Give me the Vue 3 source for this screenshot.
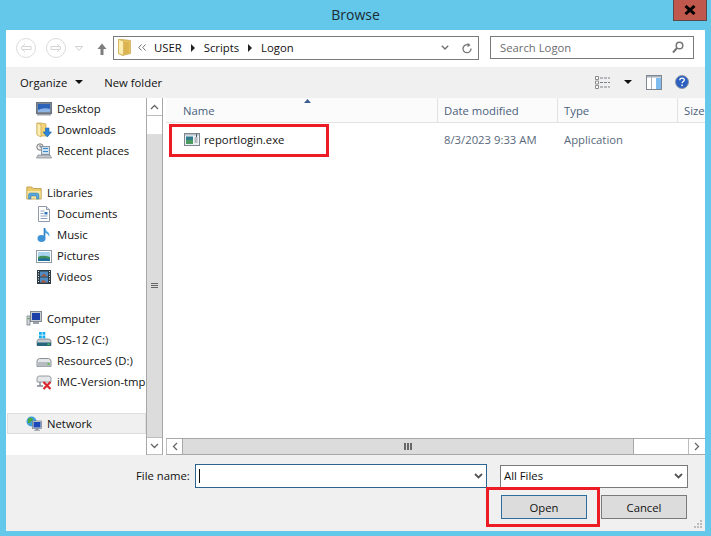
<script setup>
const tree = [
  { label: 'Desktop', icon: 'i-desktop' },
  { label: 'Downloads', icon: 'i-downloads' },
  { label: 'Recent places', icon: 'i-recent', gap: true },
  { label: 'Libraries', icon: 'i-libraries', head: true },
  { label: 'Documents', icon: 'i-doc' },
  { label: 'Music', icon: 'i-music' },
  { label: 'Pictures', icon: 'i-pictures' },
  { label: 'Videos', icon: 'i-videos', gap: true },
  { label: 'Computer', icon: 'i-computer', head: true },
  { label: 'OS-12 (C:)', icon: 'i-os' },
  { label: 'ResourceS (D:)', icon: 'i-drive' },
  { label: 'iMC-Version-tmp', icon: 'i-netdrive', gap: true },
  { label: 'Network', icon: 'i-network', head: true, selected: true },
]
</script>

<template>
  <div class="page">
    <svg class="sheet" width="0" height="0" aria-hidden="true">
      <symbol id="i-folder" viewBox="0 0 13 17">
        <path d="M.5.5h4l8 1v13l-8 2-4-2z" fill="#e7c35f" stroke="#c9a44c" stroke-width=".7" />
        <path d="M.5.500l5 1.500v14.500l-5-2z" fill="#fbeeb0" stroke="#d0ac55" stroke-width=".7" />
        <path d="M6 3h5v11l-5 1.500z" fill="#dcb44f" />
      </symbol>
      <symbol id="i-desktop" viewBox="0 0 16 16">
        <rect x=".5" y="1.500" width="15" height="11" fill="#7c8794" stroke="#6b7480" />
        <rect x="2" y="3" width="12" height="8" fill="#2a63b8" />
        <path d="M2 9q6-3 12-1v3H2z" fill="#8db4e6" />
        <rect x="1" y="13" width="14" height="1.500" fill="#9aa3ad" />
      </symbol>
      <symbol id="i-downloads" viewBox="0 0 16 16">
        <path d="M1 1h4l5 1v12H5l-4-2z" fill="#f2d477" stroke="#c9a44c" stroke-width=".7" />
        <path d="M1 1l4 1.500V15l-4-2z" fill="#fbeeb0" stroke="#c9a44c" stroke-width=".7" />
        <path d="M9.500 6h3.500v4h2.500l-4.250 5-4.250-5h2.500z" fill="#2c86d8" stroke="#1b62a8" stroke-width=".6" />
      </symbol>
      <symbol id="i-recent" viewBox="0 0 16 16">
        <circle cx="4" cy="4" r="3.200" fill="#eee" stroke="#777" />
        <path d="M4 2v2h2" fill="none" stroke="#555" stroke-width=".8" />
        <rect x="5.500" y="3.500" width="8" height="8" fill="#cfe0ee" stroke="#8a98a6" />
        <rect x="7" y="5" width="5" height="1" fill="#3a8cc8" />
        <rect x="7" y="8" width="5" height="1" fill="#3a8cc8" />
        <path d="M2 12h12l1.500 3H.5z" fill="#c4c8cc" stroke="#7e858c" stroke-width=".7" />
      </symbol>
      <symbol id="i-libraries" viewBox="0 0 16 16">
        <path d="M.8 2h5l1.500 1.500h7.900V14H.8z" fill="#eccb6a" stroke="#b8963f" stroke-width=".8" />
        <path d="M1.500 6h13v7.500h-13z" fill="#f8e7a4" />
        <path d="M2.500 14v-4q0-2 2-2h6q2.500 0 2.500 2v4h-2.500v-3h-5.500v3z" fill="#58a5d6" stroke="#2e7cb2" stroke-width=".5" />
      </symbol>
      <symbol id="i-doc" viewBox="0 0 16 16">
        <path d="M2.500.5h8l3 3v12h-11z" fill="#fff" stroke="#8f99a8" />
        <path d="M10.500.5v3h3" fill="#dfe6ee" stroke="#8f99a8" />
        <path d="M4.500 5h4M4.500 7.500h3M4.500 10h7M4.500 12.500h7" stroke="#8aa0c2" />
        <rect x="8.500" y="6" width="3" height="2.500" fill="#2e79b9" />
      </symbol>
      <symbol id="i-music" viewBox="0 0 16 16">
        <path d="M8.500 1v10" stroke="#2c7fc4" stroke-width="1.600" />
        <ellipse cx="5.500" cy="11.500" rx="4" ry="3.400" fill="#3e93d6" />
        <path d="M9 1q1 3 3.500 4.500 1.500 2 .5 4.500-.2-2.800-4-4z" fill="#56a6e0" />
      </symbol>
      <symbol id="i-pictures" viewBox="0 0 16 16">
        <rect x=".5" y="2.500" width="15" height="12" fill="#fff" stroke="#8f99a8" />
        <rect x="2" y="4" width="12" height="9" fill="#a9d4ef" />
        <path d="M2 9q4-2.500 12 0v4H2z" fill="#3f8f5a" />
        <path d="M2 11q6-1.500 12 0v2H2z" fill="#1f6f9f" />
      </symbol>
      <symbol id="i-videos" viewBox="0 0 16 16">
        <rect x="1" y="1" width="14" height="14" fill="#2d3c44" />
        <rect x="4" y="2.500" width="8" height="5" fill="#4f8dc4" />
        <rect x="4" y="8.500" width="8" height="5" fill="#4f8dc4" />
        <path d="M5 7.500l3-3 3 3zM5 13.500l2-3 4 3z" fill="#a8583c" />
        <path d="M2 2.500h1M2 5h1M2 7.500h1M2 10h1M2 12.500h1M13 2.500h1M13 5h1M13 7.500h1M13 10h1M13 12.500h1" stroke="#dfe6ee" />
      </symbol>
      <symbol id="i-computer" viewBox="0 0 16 16">
        <rect x="4.500" y=".5" width="11" height="10" fill="#c6ccd2" stroke="#828a92" />
        <rect x="6" y="2" width="8" height="7" fill="#1c3fa8" />
        <rect x="7" y="11" width="6" height="2" fill="#9aa3ad" />
        <rect x="1" y="5" width="3" height="9" fill="#d4d8dc" stroke="#6d757d" stroke-width=".7" />
        <rect x="1.700" y="7" width="1.600" height="1.200" fill="#4ca34c" />
      </symbol>
      <symbol id="i-os" viewBox="0 0 16 16">
        <path d="M3 0h2.800v2.800H3zM6.500 0h2.800v2.800H6.500zM3 3.500h2.800v2.800H3zM6.500 3.500h2.800v2.800H6.500z" fill="#10aef0" />
        <path d="M1 9q.5-2 2.500-2h9q2 0 2.500 2v4.500H1z" fill="#c2cad0" stroke="#677079" stroke-width=".7" />
        <rect x="1" y="10.500" width="14" height="3.500" rx=".5" fill="#27657e" />
        <rect x="11.500" y="11.500" width="2" height="1.500" fill="#5fc04a" />
      </symbol>
      <symbol id="i-drive" viewBox="0 0 16 16">
        <path d="M1 8q.5-2.500 2.500-2.500h9Q14.500 5.500 15 8v5.500H1z" fill="#e4e7e9" stroke="#6f777e" stroke-width=".8" />
        <rect x="1.500" y="9" width="13" height="4.500" fill="#b6bcc2" />
        <rect x="11.500" y="10" width="2" height="2" fill="#5fc04a" />
      </symbol>
      <symbol id="i-netdrive" viewBox="0 0 16 16">
        <path d="M1 4q.5-2 2.500-2h9q2 0 2.500 2v4H1z" fill="#e4e7e9" stroke="#80888e" stroke-width=".8" />
        <path d="M1 12h6M4 8v4" stroke="#80888e" stroke-width="1.400" />
        <path d="M7.500 8l7 7M14.500 8l-7 7" stroke="#d8262c" stroke-width="2.200" />
      </symbol>
      <symbol id="i-network" viewBox="0 0 16 16">
        <circle cx="5.500" cy="5.500" r="5" fill="#3f9fd8" />
        <path d="M2 3q2-2 4-1 2 2-1 3.500-1 2-3 1.500zM6 7q2 0 2 2-1 2-2 1z" fill="#4aa843" />
        <rect x="6.500" y="5" width="9" height="7.500" fill="#d4dce2" stroke="#6f7a85" stroke-width=".7" />
        <rect x="7.500" y="6" width="7" height="5.500" fill="#1c49b8" />
        <rect x="9.500" y="13" width="3" height="1" fill="#808a94" />
        <rect x="8" y="14" width="6" height="1" fill="#a8b0b8" />
      </symbol>
      <symbol id="i-exe" viewBox="0 0 16 13">
        <rect x=".5" y=".5" width="15" height="12" fill="#eef1f3" stroke="#7e868e" />
        <rect x="1" y="1" width="14" height="1.500" fill="#b9c2ca" />
        <rect x="2" y="3.500" width="7" height="7.500" fill="#2f7d8c" />
        <rect x="2" y="7" width="7" height="4" fill="#4b9b62" />
        <path d="M10.500 5h3M10.500 7h3M10.500 9h3" stroke="#7e868e" />
        <path d="M12.500 1v3" stroke="#4a5560" />
      </symbol>
    </svg>

    <header class="titlebar">
      <span></span>
      <h1 class="title">Browse</h1>
      <button class="close"><svg width="14" height="10" viewBox="0 0 14 10"><path d="M2.500 1l9 8M11.500 1l-9 8" stroke="#000" stroke-width="3" /></svg></button>
    </header>

    <section class="window">
      <div class="nav">
        <span class="round"><svg width="12" height="10" viewBox="0 0 12 10"><path d="M5 1L1 5l4 4M1.500 3.500h9.500v3H1.500" fill="none" stroke="#d4d4d4" /></svg></span>
        <span class="round fwd"><svg width="12" height="10" viewBox="0 0 12 10"><path d="M7 1l4 4-4 4M10.500 3.500H1v3h9.500" fill="none" stroke="#d4d4d4" /></svg></span>
        <svg class="hist" width="8" height="5" viewBox="0 0 8 5"><path d="M.5.500h7L4 4.500z" fill="#fff" stroke="#d0d0d0" /></svg>
        <svg class="up" width="10" height="12" viewBox="0 0 10 12"><path d="M5 .5L9.500 6H6.500v6h-3V6H.5z" fill="#7d7d7d" /></svg>
        <div class="address">
          <svg class="addr-folder" width="13" height="17"><use href="#i-folder" /></svg>
          <svg class="chev" width="8" height="7" viewBox="0 0 8 7"><path d="M3.500.5L.8 3.500l2.700 3M7.500.5L4.800 3.500l2.700 3" fill="none" stroke="#707070" /></svg>
          <span class="crumb first">USER</span>
          <span class="tri"></span>
          <span class="crumb">Scripts</span>
          <span class="tri"></span>
          <span class="crumb">Logon</span>
          <svg class="addr-down" width="8" height="5" viewBox="0 0 8 5"><path d="M.8.800L4 4l3.200-3.200" fill="none" stroke="#707070" stroke-width="1.400" /></svg>
          <svg class="refresh" width="10" height="12" viewBox="0 0 10 12"><path d="M9 6.500A4 4 0 1 1 6.500 3" fill="none" stroke="#777" stroke-width="1.300" /><path d="M5.500.8l3 2.200-2.800 2.200z" fill="#777" /></svg>
        </div>
        <div class="search">
          <span>Search Logon</span>
          <svg width="12" height="13" viewBox="0 0 12 13"><circle cx="7.500" cy="4.500" r="3.300" fill="none" stroke="#777" stroke-width="1.500" /><path d="M5 7l-4 4.500" stroke="#777" stroke-width="2" /></svg>
        </div>
      </div>

      <div class="toolbar">
        <span class="tool">Organize</span>
        <span class="caret organize-caret"></span>
        <span class="tool newf">New folder</span>
        <span class="tool-right">
          <svg width="15" height="13" viewBox="0 0 15 13"><path d="M.5.5h3v3h-3zM.5 5h3v3h-3zM.5 9.500h3v3h-3z" fill="#fff" stroke="#8a8a8a" /><path d="M5 2h10M5 6.500h10M5 11h10" stroke="#7c8086" stroke-dasharray="3 1" /></svg>
          <span class="caret view-caret"></span>
          <svg class="pane-icon" width="16" height="15" viewBox="0 0 16 15"><rect x=".5" y=".5" width="15" height="14" fill="#fff" stroke="#7d8892" /><rect x="1" y="1" width="14" height="1.500" fill="#a9b2ba" /><path d="M5.500 2v12" stroke="#a9b2ba" /><rect x="10" y="3" width="5" height="11" fill="#7fbcf0" /></svg>
          <svg width="14" height="14" viewBox="0 0 14 14"><circle cx="7" cy="7" r="6.500" fill="#2b5fc0" stroke="#8f98a2" /><path d="M4.800 5.200q0-2 2.300-2t2.200 1.900q0 1-1.300 1.700-.9.500-.9 1.400" fill="none" stroke="#fff" stroke-width="1.300" /><rect x="6.300" y="9.600" width="1.500" height="1.500" fill="#fff" /></svg>
        </span>
      </div>

      <div class="main">
        <aside class="side">
          <ul class="tree">
            <li v-for="r in tree" :key="r.label" class="row" :class="{ head: r.head, gap: r.gap, selected: r.selected }">
              <svg width="16" height="16"><use :href="'#' + r.icon" /></svg>
              <span class="row-label">{{ r.label }}</span>
            </li>
          </ul>
          <div class="vbar">
            <span class="vbtn"><svg width="9" height="6" viewBox="0 0 9 6"><path d="M1 5l3.500-3.500L8 5" fill="none" stroke="#666" stroke-width="1.300" /></svg></span>
            <span class="vthumb"><i></i><i></i><i></i></span>
            <span class="vbtn down"><svg width="9" height="6" viewBox="0 0 9 6"><path d="M1 1l3.500 3.500L8 1" fill="none" stroke="#666" stroke-width="1.300" /></svg></span>
          </div>
        </aside>
        <div class="files">
          <div class="cols header">
            <span class="col">Name<svg class="sort" width="7" height="4" viewBox="0 0 7 4"><path d="M3.500 0L7 4H0z" fill="#3b5e8c" /></svg></span>
            <span class="col">Date modified</span>
            <span class="col">Type</span>
            <span class="col last">Size</span>
          </div>
          <div class="cols file">
            <span class="col name"><svg width="16" height="13"><use href="#i-exe" /></svg>reportlogin.exe</span>
            <span class="col meta">8/3/2023 9:33 AM</span>
            <span class="col meta">Application</span>
            <span class="col"></span>
          </div>
          <div class="hbar">
            <span class="hbtn"><svg width="6" height="9" viewBox="0 0 6 9"><path d="M5 1L1.500 4.500 5 8" fill="none" stroke="#666" stroke-width="1.300" /></svg></span>
            <span class="hthumb"><i></i><i></i><i></i></span>
            <span class="hrest"></span>
            <span class="hbtn right"><svg width="6" height="9" viewBox="0 0 6 9"><path d="M1 1l3.500 3.500L1 8" fill="none" stroke="#666" stroke-width="1.300" /></svg></span>
          </div>
        </div>
      </div>

      <footer class="footer">
        <div class="line1">
          <label class="fname-label">File name:</label>
          <div class="fname">
            <span class="cursor"></span>
            <svg width="9" height="6" viewBox="0 0 9 6"><path d="M1 1l3.500 3.500L8 1" fill="none" stroke="#555" stroke-width="1.800" /></svg>
          </div>
          <div class="filter">
            <span class="filter-text">All Files</span>
            <svg width="9" height="6" viewBox="0 0 9 6"><path d="M1 1l3.500 3.500L8 1" fill="none" stroke="#555" stroke-width="1.800" /></svg>
          </div>
        </div>
        <div class="line2">
          <button class="btn primary">Open</button>
          <button class="btn">Cancel</button>
        </div>
        <svg class="grip" width="9" height="9" viewBox="0 0 9 9"><path d="M6 0h2v2H6zM3 3h2v2H3zM6 3h2v2H6zM0 6h2v2H0zM3 6h2v2H3zM6 6h2v2H6z" fill="#bdbdbd" /></svg>
      </footer>

      <div class="mark mark-file"></div>
      <div class="mark mark-open"></div>
    </section>
  </div>
</template>

<style>
html, body { margin: 0; padding: 0; }
</style>

<style scoped>
* { box-sizing: border-box; }
.sheet { position: absolute; }
.page {
  width: 711px; height: 536px; overflow: hidden;
  background: #63c8ea;
  padding: 0 6px 5px;
  display: flex; flex-direction: column;
  font-family: "Open Sans", "Noto Sans", sans-serif;
  font-size: 11.3px; color: #111;
}
.titlebar {
  height: 30px; flex: none;
  display: grid; grid-template-columns: 1fr auto 1fr;
}
.title { margin: 0; font-size: 14px; font-weight: 400; line-height: 30px; color: #1c2b33; }
.close {
  justify-self: end; align-self: start;
  width: 34px; height: 21px; margin-right: -2px; padding: 0;
  background: #c0584e; border: 1px solid #5b4a4a; border-top: 0;
  display: flex; align-items: center; justify-content: center;
}
.window { position: relative; flex: 1; background: #fff; display: flex; flex-direction: column; min-height: 0; }

.nav { height: 37px; flex: none; display: flex; align-items: flex-start; padding-top: 6px; }
.round {
  width: 20px; height: 20px; border-radius: 50%; border: 1px solid #dcdcdc;
  display: flex; align-items: center; justify-content: center;
  margin-left: 10px; margin-top: 2px;
}
.hist { margin: 10px 0 0 9px; }
.up { margin: 7px 0 0 14px; }
.address {
  width: 366px; height: 24px; margin-left: 6px;
  border: 1px solid #7a7a7a; display: flex; align-items: center; padding: 0 0 1px 4px;
}
.addr-folder { flex: none; }
.chev { margin-left: 7px; flex: none; }
.crumb.first { margin-left: 8px; }
.tri {
  width: 0; height: 0; margin: 0 9px;
  border-left: 4.500px solid #222; border-top: 4px solid transparent; border-bottom: 4px solid transparent;
}
.addr-down { margin-left: auto; }
.refresh { margin: 0 6px 0 13px; }
.search {
  width: 204px; height: 23px; margin-left: 11px;
  border: 1px solid #7a7a7a; display: flex; align-items: center; justify-content: space-between;
  padding: 0 9px; color: #6d6d6d;
}
.toolbar { height: 31px; flex: none; background: #f0f0f0; display: flex; align-items: center; padding: 0 0 1px 14px; }
.newf { margin-left: 21px; }
.caret { width: 0; height: 0; border-top: 4px solid #111; border-left: 4px solid transparent; border-right: 4px solid transparent; }
.organize-caret { margin-left: 8px; }
.tool-right { margin-left: auto; display: flex; align-items: center; padding-right: 16px; }
.view-caret { margin-left: 14px; }
.pane-icon { margin: 0 13px 0 14px; }

.main { flex: 1; min-height: 0; display: flex; }
.side { width: 157px; flex: none; display: flex; }
.tree { list-style: none; margin: 0; padding: 0; flex: 1; min-width: 0; overflow: hidden; }
.row {
  height: 21px; display: flex; align-items: center; gap: 5px; padding-left: 30px;
  white-space: nowrap; overflow: hidden;
}
.row svg { flex: none; }
.row.head { padding-left: 20px; }
.row.gap { margin-bottom: 21px; }
.row.selected { margin-left: 1px; padding-left: 19px; background: #f0f0f0; box-shadow: inset 0 0 0 1px #dedede; }
.vbar { width: 17px; flex: none; display: flex; flex-direction: column; border-left: 1px solid #a8a8a8; border-right: 1px solid #a8a8a8; }
.vbtn { height: 18px; flex: none; display: flex; align-items: center; justify-content: center; background: #fff; border-bottom: 1px solid #bdbdbd; }
.vbtn.down { border-top: 1px solid #bdbdbd; }
.vthumb { flex: 1; background: #dcdcdc; margin-top: 18px; display: flex; flex-direction: column; align-items: center; justify-content: center; gap: 1px; }
.vthumb i { width: 7px; height: 1px; background: #666; }
.files { flex: 1; min-width: 0; margin-left: 3px; display: flex; flex-direction: column; }
.cols { display: grid; grid-template-columns: 272px 120px 120px 1fr; }
.header { height: 25px; background: #fbfbfb; border-bottom: 1px solid #e3e3e3; color: #4a5f7c; }
.header .col { line-height: 26px; padding-left: 6px; border-right: 1px solid #e3e3e3; white-space: nowrap; overflow: hidden; position: relative; }
.header .col:first-child { padding-left: 17px; }
.header .col.last { border-right: 0; }
.sort { position: absolute; left: 138px; top: 1px; }
.file { height: 22px; margin-top: 5px; flex: none; align-items: center; }
.file .col { padding-left: 6px; white-space: nowrap; }
.file .name { padding-left: 18px; display: flex; align-items: center; gap: 4px; }
.meta { color: #59697c; }
.hbar { margin-top: auto; height: 17px; flex: none; display: flex; border-top: 1px solid #a8a8a8; border-bottom: 1px solid #a8a8a8; }
.hbtn { width: 17px; flex: none; background: #fff; display: flex; align-items: center; justify-content: center; border-left: 1px solid #bdbdbd; border-right: 1px solid #a8a8a8; }
.hbtn.right { border-left: 1px solid #bdbdbd; border-right: 0; }
.hthumb { width: 451px; background: #dcdcdc; display: flex; align-items: center; justify-content: center; gap: 1px; border-right: 1px solid #a8a8a8; }
.hthumb i { width: 2px; height: 7px; background: #666; }
.hrest { flex: 1; background: #fff; }

.footer { position: relative; height: 76px; flex: none; background: #f0f0f0; padding: 9px 0 0 130px; }
.line1 { display: flex; align-items: center; height: 24px; }
.fname-label { width: 59px; margin-top: -2px; }
.fname {
  width: 292px; height: 24px; background: #fff; border: 1px solid #2b6491;
  display: flex; align-items: center; justify-content: space-between; padding: 0 3px;
}
.cursor { width: 1px; height: 14px; background: #111; }
.filter {
  width: 188px; height: 23px; margin-left: 13px; background: #fff; border: 1px solid #7a7a7a;
  display: flex; align-items: center; justify-content: space-between; padding: 0 4px 0 3px;
}
.filter-text { margin-top: -2px; }
.line2 { display: flex; justify-content: flex-end; gap: 14px; margin-top: 7px; padding-right: 18px; }
.btn {
  width: 86px; height: 24px; padding: 0; background: #dcdcdc; border: 1px solid #7a7a7a;
  font: inherit; color: #111;
}
.primary { border-color: #2b6e9e; }
.grip { position: absolute; right: 2px; bottom: 2px; }

.mark { position: absolute; border: 3px solid #ed1c24; pointer-events: none; }
.mark-file { left: 163px; top: 94px; width: 160px; height: 33px; }
.mark-open { left: 480px; top: 457px; width: 114px; height: 40px; }
</style>
